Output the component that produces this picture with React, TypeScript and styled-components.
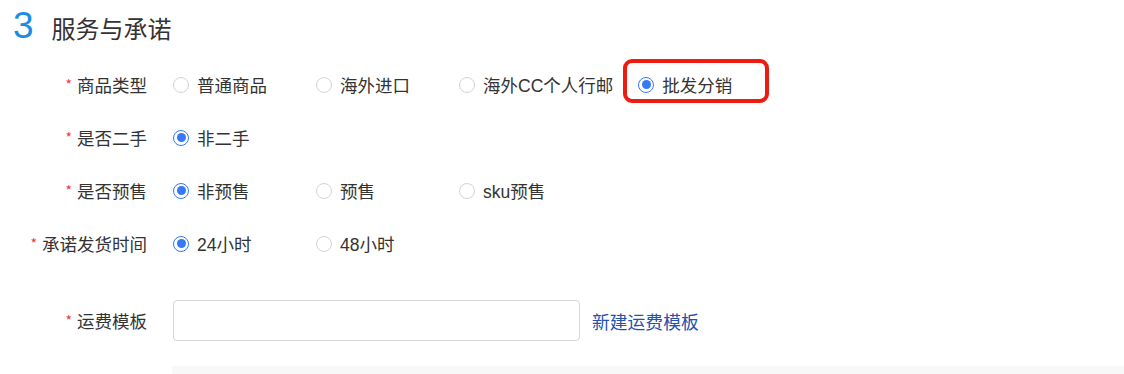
import React from "react";
import styled, { createGlobalStyle } from "styled-components";

const Global = createGlobalStyle`
  html, body { margin: 0; padding: 0; background: #fff; }
  body {
    font-family: "PingFang SC", "Noto Sans CJK SC", "Noto Sans", sans-serif;
    color: #333;
  }
`;

const Page = styled.div`
  width: 1124px;
  height: 374px;
  overflow: hidden;
  position: relative;
`;

const Header = styled.div`
  height: 58px;
  display: flex;
  align-items: baseline;
  padding-left: 13px;
  box-sizing: border-box;
  padding-top: 4px;
`;

const StepNo = styled.span`
  font-family: "Liberation Sans", Arial, sans-serif;
  font-size: 37px;
  color: #1a8ce6;
  line-height: 44px;
`;

const Title = styled.span`
  font-size: 24px;
  color: #333;
  margin-left: 18px;
  line-height: 44px;
`;

const Row = styled.div<{ $h?: number }>`
  display: flex;
  align-items: center;
  height: ${(p) => p.$h ?? 53}px;
`;

const Label = styled.div`
  width: 147px;
  flex: none;
  text-align: right;
  font-size: 17.5px;
  color: #333;
  white-space: nowrap;
  margin-right: 26px;
`;

const Star = styled.span`
  color: #f0383b;
  font-size: 14px;
  margin-right: 5px;
  position: relative;
  top: -2px;
`;

const Options = styled.div`
  display: flex;
  align-items: center;
`;

const Option = styled.label`
  position: relative;
  display: flex;
  align-items: center;
  min-width: 118px;
  margin-right: 25px;
  height: 24px;
  font-family: "Liberation Sans", "PingFang SC", "Noto Sans CJK SC", sans-serif;
  font-size: 17.5px;
  color: #333;
  white-space: nowrap;
`;

const Circle = styled.span<{ $on?: boolean }>`
  width: 16px;
  height: 16px;
  box-sizing: border-box;
  border-radius: 50%;
  border: ${(p) => (p.$on ? "1.5px solid #3579f6" : "1px solid #d4d4d4")};
  background: #fff;
  margin-right: 8px;
  flex: none;
  display: flex;
  align-items: center;
  justify-content: center;
  &::after {
    content: "";
    display: ${(p) => (p.$on ? "block" : "none")};
    width: 9px;
    height: 9px;
    border-radius: 50%;
    background: #3579f6;
  }
`;

const Highlight = styled.span`
  position: absolute;
  left: -15px;
  top: -14px;
  width: 146px;
  height: 44px;
  box-sizing: border-box;
  border: 4px solid #ee1c10;
  border-radius: 9px;
  pointer-events: none;
`;

const Input = styled.div`
  width: 407px;
  height: 41px;
  box-sizing: border-box;
  border: 1.5px solid #d6d6d6;
  border-radius: 4px;
  background: #fff;
`;

const Link = styled.a`
  margin-left: 12px;
  font-size: 17.8px;
  color: #2450ae;
  text-decoration: none;
  cursor: pointer;
`;

const Spacer = styled.div<{ $h: number }>`
  height: ${(p) => p.$h}px;
`;

const GreyBlock = styled.div`
  margin-left: 172px;
  height: 40px;
  background: #f8f8f8;
`;

type Opt = { text: string; on?: boolean; mark?: boolean };

const rows: { label: string; opts: Opt[] }[] = [
  {
    label: "商品类型",
    opts: [
      { text: "普通商品" },
      { text: "海外进口" },
      { text: "海外CC个人行邮" },
      { text: "批发分销", on: true, mark: true },
    ],
  },
  { label: "是否二手", opts: [{ text: "非二手", on: true }] },
  {
    label: "是否预售",
    opts: [{ text: "非预售", on: true }, { text: "预售" }, { text: "sku预售" }],
  },
  {
    label: "承诺发货时间",
    opts: [{ text: "24小时", on: true }, { text: "48小时" }],
  },
];

export default function App() {
  return (
    <Page>
      <Global />
      <Header>
        <StepNo>3</StepNo>
        <Title>服务与承诺</Title>
      </Header>
      {rows.map((r) => (
        <Row key={r.label}>
          <Label>
            <Star>*</Star>
            {r.label}
          </Label>
          <Options>
            {r.opts.map((o) => (
              <Option key={o.text}>
                <Circle $on={o.on} />
                {o.text}
                {o.mark && <Highlight />}
              </Option>
            ))}
          </Options>
        </Row>
      ))}
      <Spacer $h={30} />
      <Row $h={41}>
        <Label>
          <Star>*</Star>
          运费模板
        </Label>
        <Input />
        <Link>新建运费模板</Link>
      </Row>
      <Spacer $h={25} />
      <GreyBlock />
    </Page>
  );
}
